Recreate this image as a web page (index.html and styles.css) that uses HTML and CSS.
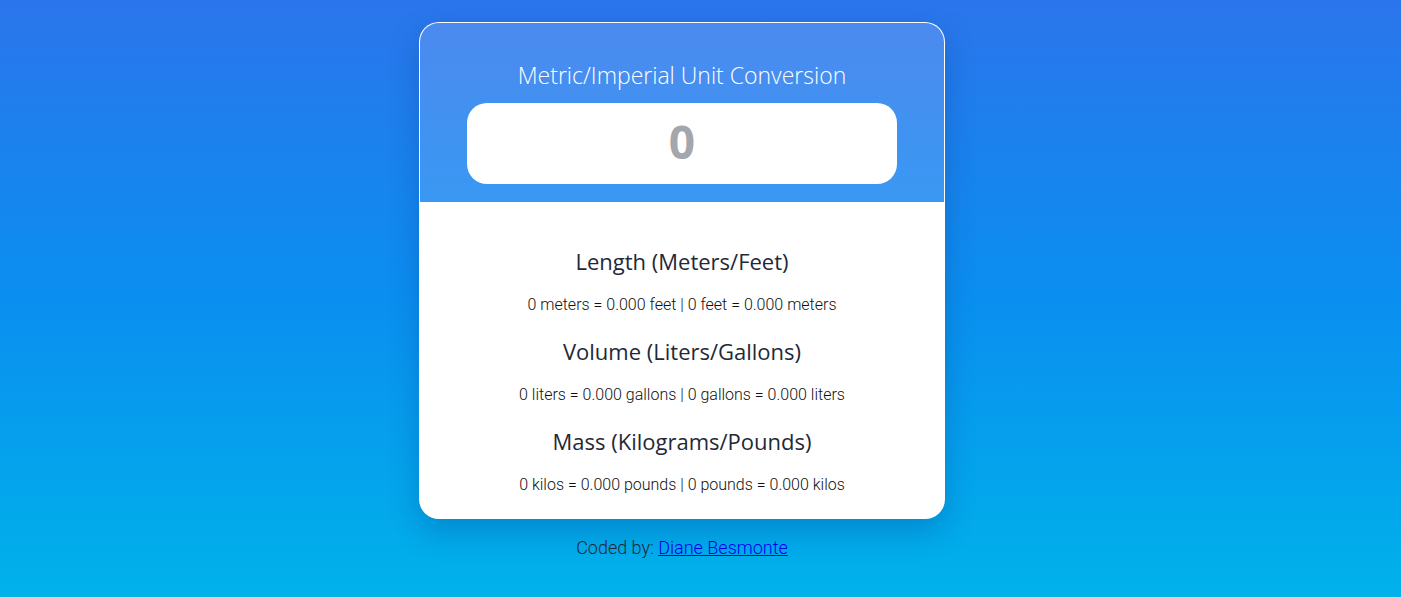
FILE: index.html
```html
<!DOCTYPE html>
<html lang="en">
<head>
<meta charset="utf-8">
<title>Unit Conversion</title>
<link rel="stylesheet" href="styles.css">
</head>
<body>
<main class="page">
  <section class="card">
    <header class="card-head">
      <h1 class="title">Metric/Imperial Unit Conversion</h1>
      <div class="input-box"><span class="input-value">0</span></div>
    </header>
    <div class="card-body">
      <div class="group">
        <h2 class="group-title">Length (Meters/Feet)</h2>
        <p class="group-text">0 meters = 0.000 feet | 0 feet = 0.000 meters</p>
      </div>
      <div class="group">
        <h2 class="group-title">Volume (Liters/Gallons)</h2>
        <p class="group-text">0 liters = 0.000 gallons | 0 gallons = 0.000 liters</p>
      </div>
      <div class="group">
        <h2 class="group-title">Mass (Kilograms/Pounds)</h2>
        <p class="group-text">0 kilos = 0.000 pounds | 0 pounds = 0.000 kilos</p>
      </div>
    </div>
  </section>
  <p class="credit">Coded by: <a href="#" class="credit-link">Diane Besmonte</a></p>
</main>
</body>
</html>
```

FILE: styles.css
```css
html, body {
  margin: 0;
  padding: 0;
  height: 100%;
}
body {
  background: linear-gradient(to bottom, #2b75eb 0%, #0a8ff0 50%, #00b2ea 100%);
  font-family: Roboto, "Liberation Sans", sans-serif;
  color: #1f2937;
}
.page {
  display: flex;
  flex-direction: column;
  align-items: center;
  padding: 22px 37px 0 0;
}
.card {
  width: 526px;
  border-radius: 20px;
  overflow: hidden;
  background: #fff;
  box-shadow: 0 12px 30px rgba(0, 40, 120, 0.25);
  border: 1px solid rgba(255, 255, 255, 0.35);
  box-sizing: border-box;
}
.card-head {
  background: linear-gradient(to bottom, #4b8aee, #3998f3);
  display: flex;
  flex-direction: column;
  align-items: center;
  padding: 37px 0 18px;
}
.title {
  margin: 0;
  font-family: "Open Sans", "Noto Sans", sans-serif;
  font-weight: 300;
  font-size: 23px;
  line-height: 30px;
  color: #fff;
}
.input-box {
  margin-top: 13px;
  width: 430px;
  height: 81px;
  background: #fff;
  border-radius: 20px;
  display: flex;
  align-items: center;
  justify-content: center;
}
.input-value {
  font-family: "Open Sans", sans-serif;
  font-weight: 700;
  font-size: 46px;
  line-height: 1;
  padding-bottom: 5px;
  color: #a3a6ad;
}
.card-body {
  padding: 44px 0 23px;
  display: flex;
  flex-direction: column;
  gap: 21px;
}
.group {
  display: flex;
  flex-direction: column;
  align-items: center;
}
.group-title {
  margin: 0;
  font-family: "Open Sans", "Noto Sans", sans-serif;
  font-weight: 400;
  font-size: 22px;
  line-height: 30px;
  color: #1f2937;
}
.group-text {
  margin: 19px 0 0;
  font-weight: 300;
  font-size: 16px;
  line-height: 20px;
  color: #111;
}
.credit {
  margin: 19px 0 0;
  font-weight: 300;
  font-size: 18px;
  line-height: 20px;
  color: #1f2937;
}
.credit-link {
  color: #0000ee;
}
```
